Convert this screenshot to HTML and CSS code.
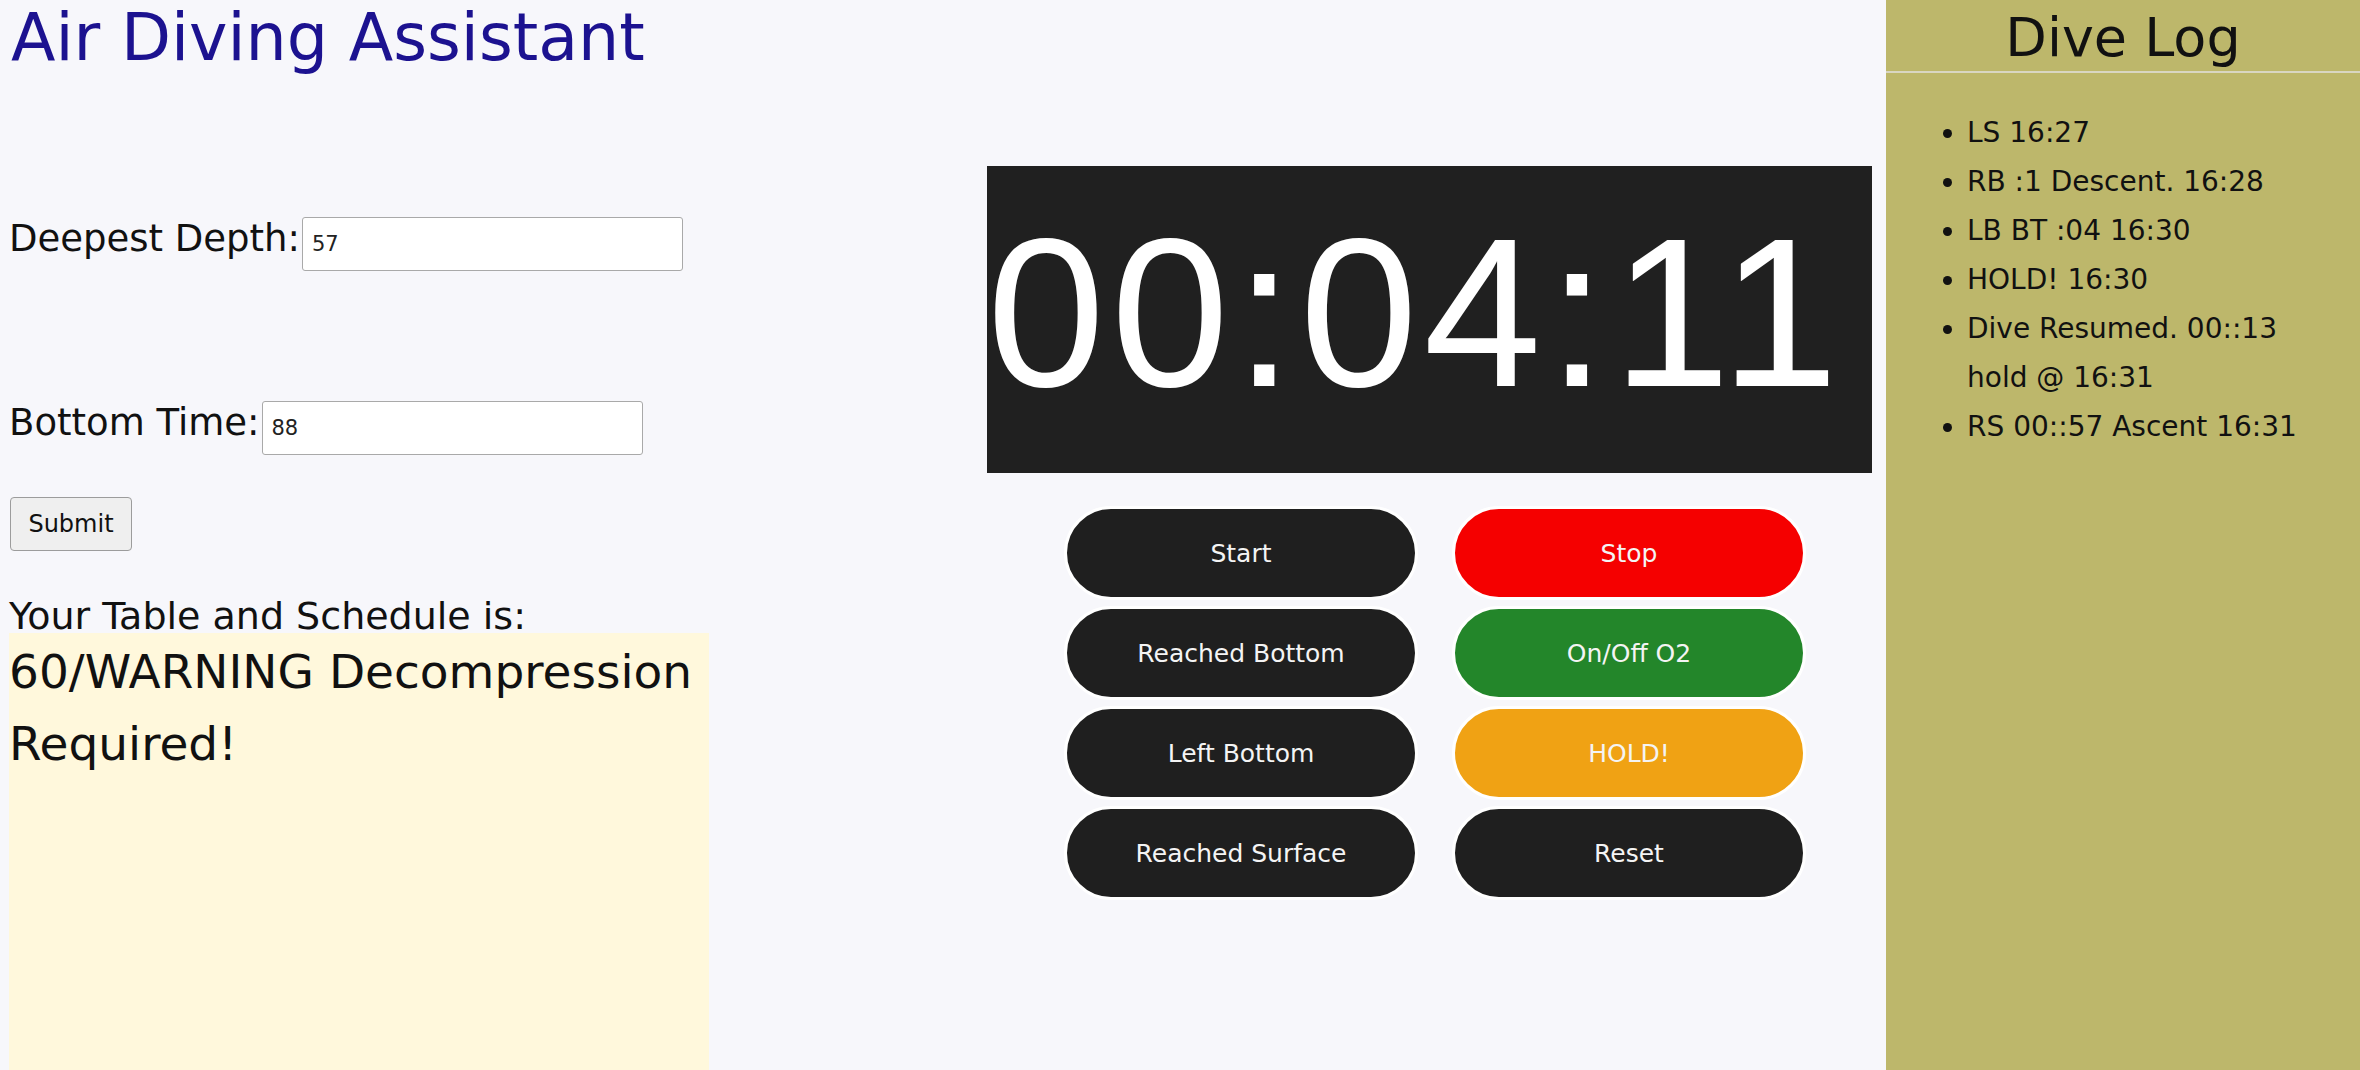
FILE: index.html
```html
<!DOCTYPE html>
<html lang="en">
<head>
<meta charset="utf-8">
<title>Air Diving Assistant</title>
<link rel="stylesheet" href="styles.css">
</head>
<body>
<div class="page">
  <main class="main">
    <section class="left">
      <h1 class="title">Air Diving Assistant</h1>
      <form class="form">
        <div class="field field-depth">
          <label class="field-label" for="depth">Deepest Depth:</label>
          <input class="field-input" id="depth" type="text" value="57">
        </div>
        <div class="field field-time">
          <label class="field-label" for="btime">Bottom Time:</label>
          <input class="field-input" id="btime" type="text" value="88">
        </div>
        <button class="submit" type="button">Submit</button>
      </form>
      <p class="result-label">Your Table and Schedule is:</p>
      <div class="result">60/WARNING Decompression Required!</div>
    </section>
    <section class="center">
      <div class="timer">00:04:11</div>
      <div class="controls">
        <button class="ctl" type="button">Start</button>
        <button class="ctl ctl-stop" type="button">Stop</button>
        <button class="ctl" type="button">Reached Bottom</button>
        <button class="ctl ctl-o2" type="button">On/Off O2</button>
        <button class="ctl" type="button">Left Bottom</button>
        <button class="ctl ctl-hold" type="button">HOLD!</button>
        <button class="ctl" type="button">Reached Surface</button>
        <button class="ctl" type="button">Reset</button>
      </div>
    </section>
  </main>
  <aside class="log">
    <h2 class="log-title">Dive Log</h2>
    <ul class="log-list">
      <li>LS 16:27</li>
      <li>RB :1 Descent. 16:28</li>
      <li>LB BT :04 16:30</li>
      <li>HOLD! 16:30</li>
      <li>Dive Resumed. 00::13 hold @ 16:31</li>
      <li>RS 00::57 Ascent 16:31</li>
    </ul>
  </aside>
</div>
</body>
</html>
```
FILE: styles.css
```css
html, body {
  margin: 0;
  padding: 0;
  height: 100%;
}

body {
  background: #f7f7fb;
  color: #111;
  font-family: "DejaVu Sans", "Noto Sans", sans-serif;
}

.page {
  display: flex;
  height: 1070px;
  overflow: hidden;
}

.main {
  flex: 1;
  display: flex;
  min-width: 0;
}

/* Left column */
.left {
  width: 709px;
  box-sizing: border-box;
  padding-left: 9px;
  display: flex;
  flex-direction: column;
}

.title {
  margin: 0 0 0 2px;
  font-size: 65px;
  line-height: 76px;
  font-weight: normal;
  color: #1c1290;
  white-space: nowrap;
}

.form {
  display: flex;
  flex-direction: column;
  align-items: flex-start;
}

.field {
  display: flex;
  align-items: baseline;
  gap: 2px;
}

.field-depth {
  margin-top: 141px;
}

.field-time {
  margin-top: 130px;
}

.field-label {
  font-size: 37px;
  color: #111;
}

.field-input {
  width: 381px;
  height: 54px;
  box-sizing: border-box;
  border: 1px solid #a9a9a9;
  border-radius: 3px;
  background: #fff;
  padding: 0 9px;
  font-family: "DejaVu Sans", sans-serif;
  font-size: 21px;
  color: #222;
}

.submit {
  margin-top: 42px;
  width: 122px;
  height: 54px;
  box-sizing: border-box;
  border: 1px solid #9c9c9c;
  border-radius: 4px;
  background: #efefef;
  font-family: "DejaVu Sans", sans-serif;
  font-size: 24px;
  color: #111;
  padding: 0;
  margin-left: 1px;
}

.result-label {
  margin: 48px 0 0 0;
  font-size: 38px;
  line-height: 34px;
  white-space: nowrap;
}

.result {
  flex: 1;
  width: 700px;
  background: #fff8dc;
  padding-top: 3px;
  font-size: 47px;
  line-height: 72px;
  color: #111;
}

/* Center column */
.center {
  flex: 1;
  display: flex;
  flex-direction: column;
  align-items: flex-start;
  padding-top: 166px;
  padding-left: 278px;
}

.timer {
  width: 885px;
  height: 307px;
  box-sizing: border-box;
  background: #202020;
  color: #fff;
  font-family: "Liberation Sans", Arial, sans-serif;
  font-size: 212px;
  line-height: 212px;
  letter-spacing: 6px;
  padding-top: 41px;
  white-space: nowrap;
}

.controls {
  margin-top: 33px;
  margin-left: 77px;
  display: grid;
  grid-template-columns: 354px 354px;
  column-gap: 34px;
  row-gap: 6px;
}

.ctl {
  height: 94px;
  box-sizing: border-box;
  border: 3px solid #fff;
  border-radius: 47px;
  background: #1f1f1f;
  color: #f4f4f4;
  font-family: "DejaVu Sans", sans-serif;
  font-size: 25px;
  padding: 0;
}

.ctl-stop {
  background: #f50000;
}

.ctl-o2 {
  background: #23862a;
}

.ctl-hold {
  background: #f0a214;
}

/* Dive log */
.log {
  width: 474px;
  flex: none;
  background: #bdb76b;
  box-sizing: border-box;
  padding-right: 30px;
}

.log-title {
  margin: 0 -30px 0 0;
  padding-top: 5px;
  font-size: 54px;
  line-height: 66px;
  font-weight: normal;
  text-align: center;
  color: #111;
  border-bottom: 2px solid #d9d6c2;
}

.log-list {
  margin: 35px 0 0 0;
  padding-left: 81px;
  font-size: 28px;
  line-height: 49px;
  color: #111;
}
```
